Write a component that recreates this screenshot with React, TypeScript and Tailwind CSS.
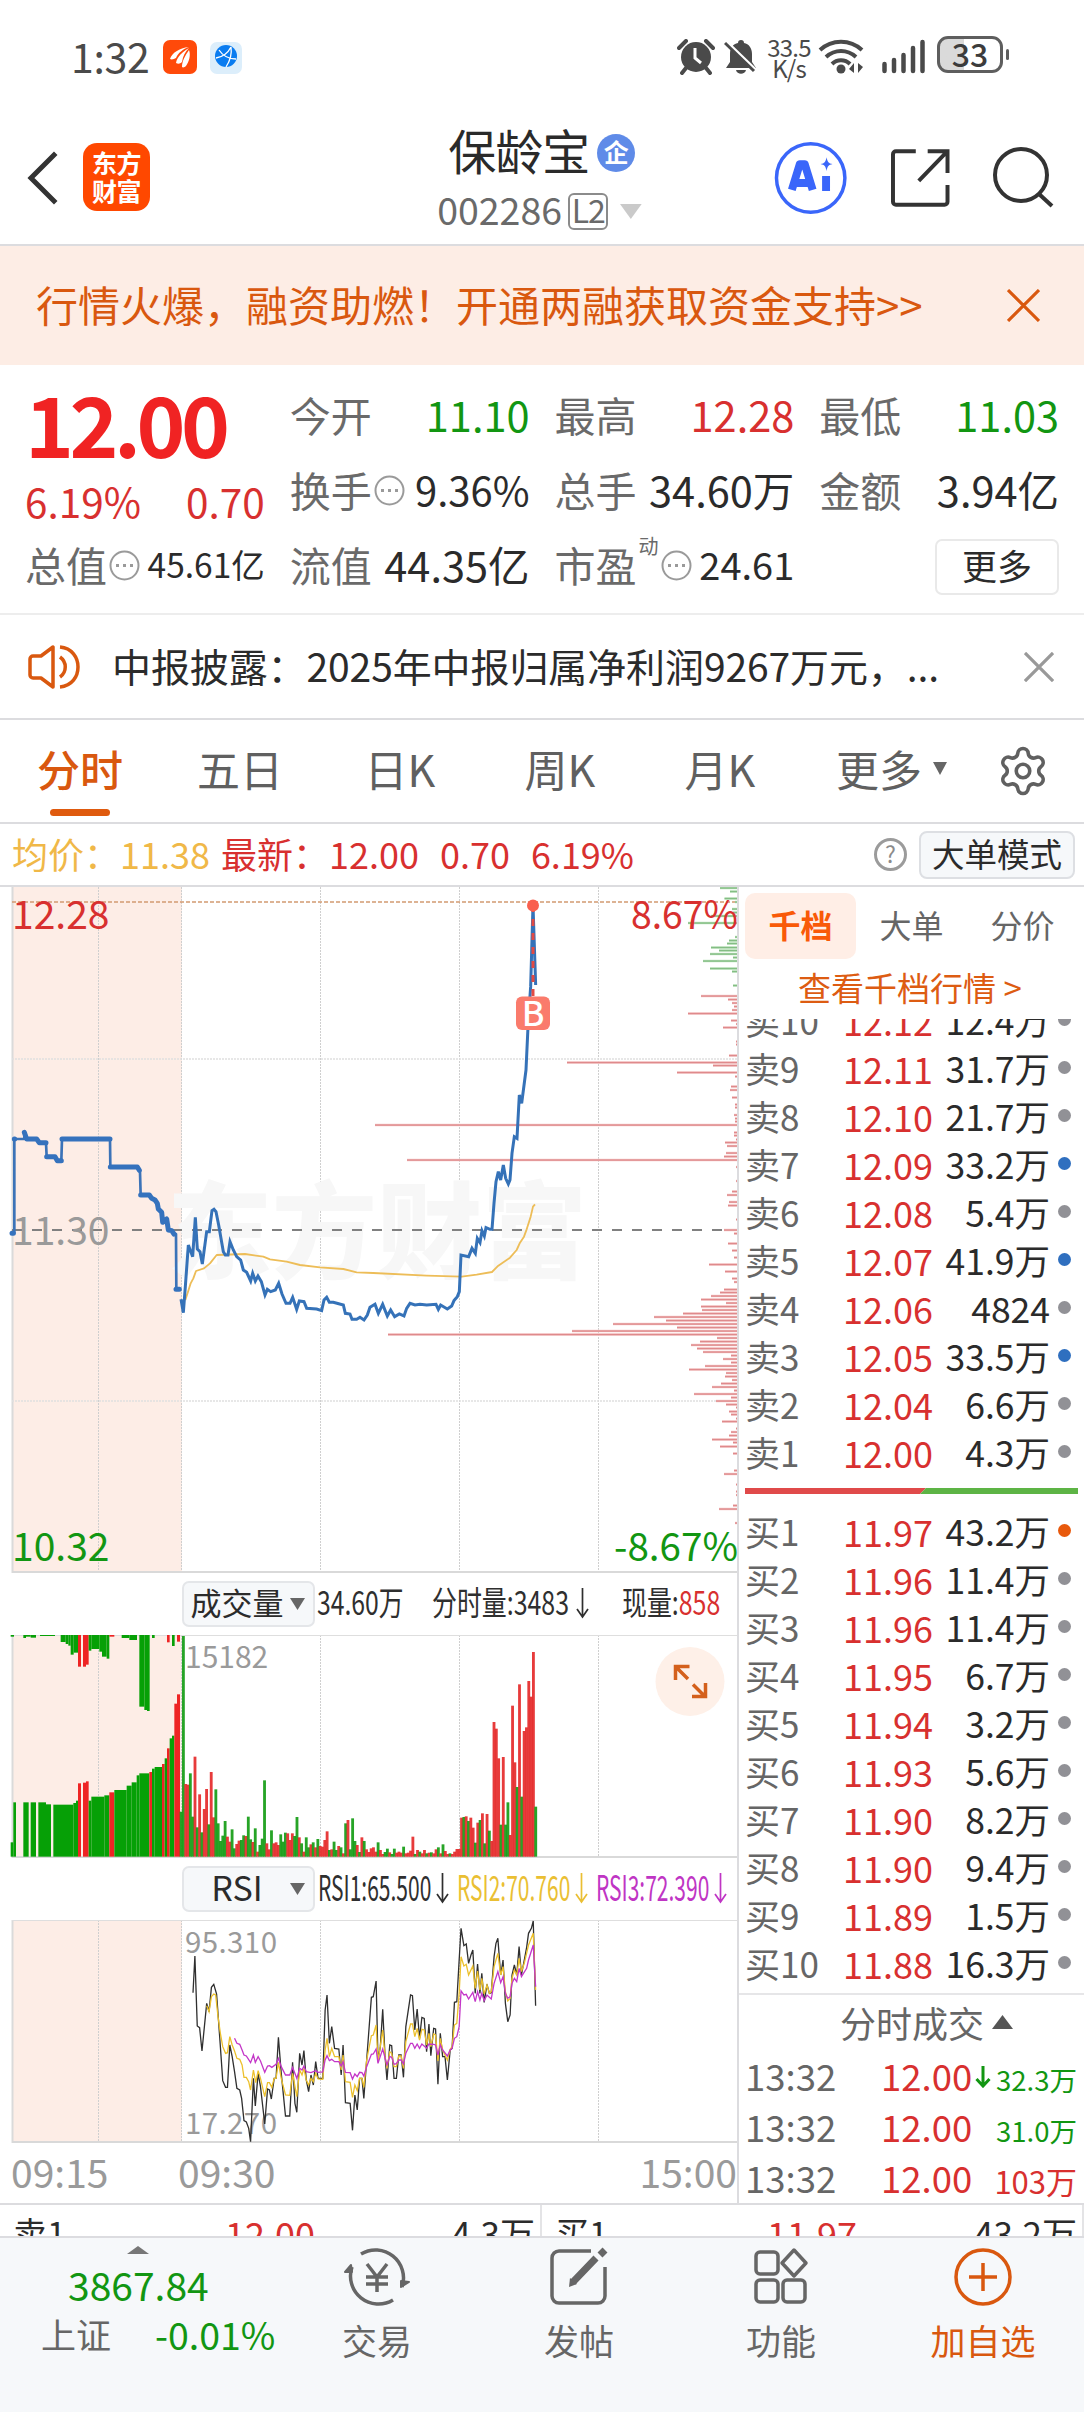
import React from 'react';
import { Settings } from 'lucide-react';

type Tone = 'up' | 'down' | 'ink';

const toneClass: Record<Tone, string> = {
  up: 'text-[#d8302f]',
  down: 'text-[#129612]',
  ink: 'text-[#2b2b2b]',
};

const RED = '#ee2424';
const GREEN = '#06a006';

/* ---------- order book ---------- */

interface BookRow {
  label: string;
  price: string;
  volume: string;
  dot?: string;
}

const asks: BookRow[] = [
  { label: '卖10', price: '12.12', volume: '12.4万' },
  { label: '卖9', price: '12.11', volume: '31.7万' },
  { label: '卖8', price: '12.10', volume: '21.7万' },
  { label: '卖7', price: '12.09', volume: '33.2万', dot: 'bg-[#2f6fbf]' },
  { label: '卖6', price: '12.08', volume: '5.4万' },
  { label: '卖5', price: '12.07', volume: '41.9万', dot: 'bg-[#2f6fbf]' },
  { label: '卖4', price: '12.06', volume: '4824' },
  { label: '卖3', price: '12.05', volume: '33.5万', dot: 'bg-[#2f6fbf]' },
  { label: '卖2', price: '12.04', volume: '6.6万' },
  { label: '卖1', price: '12.00', volume: '4.3万' },
];

const bids: BookRow[] = [
  { label: '买1', price: '11.97', volume: '43.2万', dot: 'bg-[#e8590c]' },
  { label: '买2', price: '11.96', volume: '11.4万' },
  { label: '买3', price: '11.96', volume: '11.4万' },
  { label: '买4', price: '11.95', volume: '6.7万' },
  { label: '买5', price: '11.94', volume: '3.2万' },
  { label: '买6', price: '11.93', volume: '5.6万' },
  { label: '买7', price: '11.90', volume: '8.2万' },
  { label: '买8', price: '11.90', volume: '9.4万' },
  { label: '买9', price: '11.89', volume: '1.5万' },
  { label: '买10', price: '11.88', volume: '16.3万' },
];

/* ---------- chart data ---------- */

// [y, length] of the volume-at-price bars
const profileDown: [number, number][] = [
  [888, 17], [891.5, 7], [898.5, 12.5], [902, 2], [909, 5], [912.5, 4], [916, 26], [923, 49], [937, 2],
  [940.5, 8], [943.5, 10], [947.5, 26], [950.5, 18], [954, 27], [957.5, 4], [961, 34], [968.5, 27],
  [971.5, 5], [985.5, 4],
];

const profileUp: [number, number][] = [
  [996, 36], [999.5, 9], [1003, 5], [1006.5, 3], [1010, 5], [1013.5, 49], [1020.5, 6], [1024, 1], [1027.5, 14],
  [1041.5, 1], [1044.5, 1], [1055.5, 8], [1062.5, 170], [1065.5, 24], [1072.5, 60], [1076.5, 2], [1086.5, 6],
  [1090, 7], [1097.5, 5], [1104.5, 2], [1107.5, 2], [1115, 3], [1118.5, 2], [1121.5, 2], [1125, 362],
  [1132.5, 3], [1135.5, 3], [1139.5, 1], [1142.5, 12], [1146, 10], [1153, 11], [1156.5, 13], [1160, 330],
  [1167, 1], [1181, 1], [1191.5, 5], [1195, 10], [1202, 8], [1205.5, 9], [1219.5, 1], [1230, 13], [1233.5, 3],
  [1243.5, 9], [1250.5, 5], [1257.5, 3], [1264.5, 28], [1271.5, 12], [1278.5, 5], [1282, 3], [1289.5, 13],
  [1292.5, 17], [1296, 26], [1299.5, 36], [1303, 11], [1306.5, 36], [1310, 35], [1313.5, 54], [1317, 83],
  [1320.5, 71], [1324, 124], [1327.5, 60], [1331, 165], [1334.5, 349], [1338, 20], [1341.5, 37], [1345, 46],
  [1348.5, 40], [1352, 34], [1355.5, 6], [1359, 14], [1362.5, 6], [1366, 32], [1369.5, 48], [1373, 11],
  [1376.5, 12], [1380, 5], [1383.5, 16], [1387, 25], [1390.5, 3], [1394, 43], [1397.5, 6], [1401, 21],
  [1404.5, 11], [1407.5, 1], [1411.5, 8], [1414.5, 6], [1418.5, 1], [1421.5, 15], [1428.5, 1], [1432, 6],
  [1435.5, 8], [1439.5, 25], [1442.5, 4], [1446.5, 17], [1453.5, 4], [1470.5, 3], [1474, 13], [1484.5, 1],
  [1491.5, 1], [1495, 1], [1505.5, 4], [1509, 18], [1523, 2],
];

const auctionLine =
  '36,1090 43,1090 43,807 73,807 73,787 80,807 110,807 118,818 138,818 140,860 165,860 172,872 184,872 186,807 330,807 331,891 412,891 420,905 422,975 448,975 455,985 465,990 472,1000 475,1017 485,1027 488,1057 500,1047 505,1080 515,1082 522,1092 528,1092 529,1258 540,1258';

const auctionMarks =
  'M36 1090h4M43 807h1M73 787l7 20h30l8 11h20M140 860h25l7 12h12M186 807h144M331 891h81l6 10M422 975h26l7 10l10 5l7 10l3 17l10 10l3 30l12-10l5 33l10 2l7 10M528 1258h10';

const priceLine =
  '543,1288 550,1328 556,1250 565,1125 578,1160 586,1042 592,1137 600,1145 607,1182 620,1085 628,1085 636,1022 642,1018 648,1025 656,1065 670,1145 676,1155 684,1155 690,1115 700,1140 710,1160 722,1170 730,1200 740,1207 752,1233 758,1210 766,1233 774,1218 784,1235 795,1275 802,1258 812,1265 826,1260 836,1240 846,1272 858,1300 870,1300 878,1282 890,1318 898,1293 912,1295 920,1315 950,1317 965,1322 972,1290 980,1282 988,1297 1000,1297 1030,1305 1036,1330 1050,1332 1056,1348 1070,1348 1080,1342 1092,1350 1102,1335 1110,1312 1125,1303 1135,1330 1148,1303 1162,1338 1172,1320 1184,1340 1198,1332 1212,1338 1220,1315 1230,1300 1245,1305 1260,1303 1280,1305 1308,1303 1315,1318 1322,1305 1342,1317 1355,1308 1362,1292 1372,1280 1378,1265 1383,1155 1406,1160 1416,1135 1426,1150 1432,1105 1440,1118 1446,1082 1453,1098 1458,1073 1470,1078 1476,1078 1482,1000 1488,935 1495,905 1502,930 1510,885 1517,925 1525,942 1530,930 1536,850 1543,800 1551,805 1558,675 1565,700 1578,600 1585,450 1592,350 1599,105 1607,345';

const averageLine =
  '556,1290 565,1262 572,1240 580,1225 588,1203 612,1195 630,1180 650,1155 735,1152 790,1160 810,1168 860,1175 900,1185 960,1192 1030,1197 1070,1207 1120,1209 1280,1217 1385,1220 1430,1214 1476,1206 1495,1187 1530,1163 1550,1140 1560,1118 1572,1100 1580,1078 1592,1040 1599,1010 1605,1003';

// [x0, x1, top, red?] of the call auction volume
const auctionVolume: [number, number, number, number][] = [
  [32, 40, 847, 0], [40, 48, 727, 0], [70, 86, 727, 0], [92, 108, 727, 0], [115, 138, 727, 0], [138, 153, 733, 0],
  [160, 220, 734, 0], [220, 228, 729, 0], [228, 234, 722, 0], [234, 243, 670, 1], [249, 258, 668, 1],
  [258, 266, 664, 1], [266, 274, 722, 0], [274, 313, 710, 0], [313, 328, 706, 0], [328, 343, 697, 1],
  [343, 380, 690, 0], [380, 395, 677, 0], [395, 410, 667, 0], [410, 418, 646, 0], [418, 448, 640, 0],
  [448, 456, 636, 1], [456, 464, 626, 0], [464, 486, 621, 0], [486, 494, 612, 1], [494, 501, 595, 0],
  [501, 509, 565, 1], [509, 516, 535, 0], [516, 523, 527, 0], [523, 531, 431, 1], [531, 540, 403, 1],
];

// [x0, x1, bottom, red?] of the unmatched volume hanging from the top
const unmatchedVolume: [number, number, number, number][] = [
  [32, 42, 230, 0], [70, 78, 234, 0], [78, 92, 230, 0], [92, 108, 233, 0], [120, 165, 228, 0], [182, 197, 246, 0],
  [197, 205, 252, 0], [205, 212, 257, 0], [212, 221, 284, 0], [221, 234, 278, 0], [234, 243, 320, 1],
  [249, 258, 320, 1], [258, 266, 314, 1], [266, 274, 272, 0], [274, 298, 267, 0], [298, 306, 275, 0],
  [306, 320, 290, 0], [320, 328, 296, 0], [328, 343, 230, 1], [365, 388, 234, 0], [388, 411, 240, 0],
  [418, 433, 440, 0], [433, 441, 450, 0], [441, 449, 453, 0], [456, 464, 234, 0], [501, 509, 247, 1],
  [516, 524, 258, 0], [531, 540, 245, 1],
];

// one entry for each minute from 09:30 on: top of the bar, and r / g
const minuteVolume =
  '755g 228g 672r 674r 640g 770g 590r 802g 703r 817g 747r 687r 793g 636r 772r 688g 790g 843g 827g 783g 830r 845r 808g 865g 852r 842r 840g 826g 828r 770g 838g 846r 805g 875r 855g 836g 661g 850r 868r 811g 850r 847r 855r 823g 845g 818g 820r 840r 820r 828g 771g 832r 850g 875r 832g 862g 853r 847g 862r 837g 858r 860r 840r 814r 870g 868r 845g 870g 858r 862g 880r 790g 780r 868g 775g 843g 855r 876g 832r 843g 868r 876r 865r 862r 875r 847g 870r 882r 876g 866g 877r 882g 866g 878r 875r 878r 860g 880r 878r 872r 830r 882g 870r 875g 880r 870r 880g 878r 877g 880r 868r 862g 880r 853g 873r 882r 880g 882r 875r 867r 867r 773r 771g 769r 783g 773r 803r 848g 788r 780g 760r 850g 762r 812g 843r 486r 506r 595r 794g 591r 794g 727g 825r 437r 607r 681g 373r 710g 513r 502r 363r 410r 276r 740g'.split(' ');

const rsi1 =
  '409,398 413,288 418,498 423,503 428,573 438,430 443,455 448,382 453,373 459,402 466,540 472,662 478,682 482,682 487,555 492,590 497,635 502,685 508,690 512,715 517,782 522,786 527,805 531,845 537,655 541,738 547,640 552,680 561,792 567,687 571,690 575,717 581,655 585,655 590,532 596,640 605,768 614,768 620,607 625,730 629,757 635,580 640,615 644,572 649,660 654,695 659,645 664,675 669,605 674,655 684,655 689,450 693,405 698,550 703,500 709,565 718,567 723,645 727,555 732,728 742,730 747,811 752,705 757,750 762,655 767,655 771,715 777,600 787,412 791,410 797,363 801,600 806,560 811,448 816,590 820,660 826,555 830,557 835,655 840,655 845,585 850,585 855,652 860,500 870,405 874,407 879,510 884,447 889,535 894,472 899,475 904,575 909,492 913,587 919,505 923,507 928,673 933,520 938,590 943,590 948,660 954,570 958,565 963,427 968,425 973,300 977,205 983,257 988,252 993,310 998,285 1002,270 1007,400 1012,312 1017,400 1021,340 1026,427 1032,373 1037,400 1041,398 1047,290 1051,250 1055,235 1061,345 1066,300 1071,430 1076,485 1081,465 1085,345 1090,315 1095,345 1100,260 1105,345 1111,300 1116,262 1120,220 1126,205 1130,183 1135,437';

const rsi2 =
  '438,437 443,455 448,410 453,402 457,405 462,470 467,520 472,560 478,580 482,578 487,530 492,555 497,573 502,595 508,598 513,615 517,652 522,652 527,665 531,690 537,630 542,668 547,632 552,655 561,710 567,668 571,668 576,682 581,655 585,655 590,607 596,655 605,705 614,706 620,640 629,710 635,630 640,645 644,625 649,660 654,675 659,655 664,665 669,640 674,657 684,658 689,570 693,535 698,590 703,565 709,590 718,590 723,630 727,585 732,665 742,667 747,712 752,675 757,692 762,655 767,655 771,682 777,600 787,527 791,525 797,495 801,605 811,510 816,590 820,625 826,575 830,580 835,620 840,620 845,588 850,588 855,625 860,545 870,492 874,492 879,530 884,505 889,540 894,508 899,510 904,555 909,520 913,560 919,522 923,525 928,603 933,535 938,570 948,600 954,568 958,560 963,495 968,490 973,400 977,290 983,318 988,313 993,345 1002,318 1007,385 1012,333 1017,390 1021,355 1026,402 1032,375 1037,400 1041,395 1047,320 1055,280 1061,345 1066,320 1071,395 1076,423 1081,415 1085,355 1090,330 1095,345 1100,295 1105,335 1111,310 1120,255 1130,220 1135,390';

const rsi3 =
  '497,535 502,550 508,553 513,570 517,585 522,588 531,608 537,585 541,607 547,590 552,603 561,637 567,618 571,617 576,622 585,613 590,595 596,620 605,645 614,645 620,622 629,655 635,625 640,630 644,618 649,635 659,638 664,635 669,632 674,637 684,636 689,600 693,587 698,602 703,598 709,605 718,605 723,618 727,605 732,637 742,638 747,657 752,642 757,650 762,637 767,638 771,648 777,620 787,583 791,582 797,567 801,610 811,567 820,615 826,590 830,592 835,613 840,611 845,600 850,600 855,612 860,580 870,550 874,550 879,565 884,552 889,565 894,552 904,565 909,552 919,553 923,555 928,585 933,555 938,570 948,588 954,570 958,565 963,535 968,530 973,500 977,393 983,405 988,403 993,417 1002,397 1007,425 1012,395 1017,420 1021,400 1026,422 1032,405 1041,417 1047,370 1055,335 1061,368 1066,350 1071,400 1076,415 1081,410 1085,370 1090,355 1095,365 1100,325 1105,350 1116,325 1120,300 1130,255 1135,380';

/* ---------- header ---------- */

const StatusBar = () => (
  <div className="flex h-[113px] items-start pl-[71px] pr-[75px] pt-[36px]">
    <span className="w-[92px] text-[41px] leading-[38px] tracking-[-0.3px] text-[#4a4a4a]">1:32</span>
    <svg width="34" height="34" viewBox="0 0 34 34" className="mt-[4px]">
      <rect width="34" height="34" rx="7" fill="#ff4a0a" />
      <path d="M7 19c2-6 9-11 19-12-6 2-11 6-13 11-2 1-4 2-6 1zM13 23c1-6 6-11 13-15-4 4-6 8-7 14-2 2-4 2-6 1zM19 27c0-6 3-11 7-17 2 5 0 12-3 16-1 1-3 2-4 1z" fill="#fff" />
    </svg>
    <svg width="32" height="32" viewBox="0 0 32 32" className="ml-[13px] mt-[6px]">
      <rect width="32" height="32" rx="7" fill="#dceefb" />
      <circle cx="16" cy="14" r="11" fill="#0a7cf0" />
      <path d="M6 16c6-1 12-5 15-11M9 8c4 6 10 9 17 9M21 5c1 7-1 14-5 20" fill="none" stroke="#fff" strokeWidth="1.300" />
    </svg>
    <div className="ml-auto flex items-start">
      <svg width="38" height="36" viewBox="0 0 38 36" className="mt-[3px]">
        <circle cx="19" cy="18" r="15" fill="#4a4a4a" />
        <path d="M2 9l7-7M36 9l-7-7M9 29l-4 5M29 29l4 5" stroke="#4a4a4a" strokeWidth="4" strokeLinecap="round" />
        <path d="M18 9v10l6 5" fill="none" stroke="#fff" strokeWidth="3" />
      </svg>
      <svg width="34" height="36" viewBox="0 0 34 36" className="ml-[9px] mt-[3px]">
        <path d="M17 1c2 0 3 1 3 3 5 1 8 5 8 11v8l4 6H2l4-6v-8c0-6 3-10 8-11 0-2 1-3 3-3zM12 31h10c-1 5-9 5-10 0z" fill="#4a4a4a" />
        <path d="M3 3l30 29" stroke="#fff" strokeWidth="3" />
        <path d="M1 4l29 28" stroke="#4a4a4a" strokeWidth="3" />
      </svg>
      <div className="ml-[8px] w-[46px] text-center text-[24px] leading-[21px] tracking-[-0.8px] text-[#4a4a4a]">
        <div>33.5</div>
        <div>K/s</div>
      </div>
      <svg width="46" height="36" viewBox="0 0 46 36" className="ml-[6px] mt-[3px]">
        <path d="M2 11c12-11 30-11 42 0M8 18c9-8 21-8 30 0M14 25c5-5 13-5 18 0" fill="none" stroke="#4a4a4a" strokeWidth="4" />
        <circle cx="23" cy="30" r="4.5" fill="#4a4a4a" />
        <path d="M31 30l5-6v10zM45 28l-5 6v-10z" fill="#4a4a4a" />
      </svg>
      <svg width="44" height="36" viewBox="0 0 44 36" className="ml-[18px] mt-[2px]">
        <path d="M2.500 33v-7M12 33v-11M21.500 33v-16M31 33v-23M40.500 33v-29" stroke="#4a4a4a" strokeWidth="4.500" strokeLinecap="round" />
      </svg>
      <div className="ml-[11px] flex h-[37px] w-[66px] items-center justify-center rounded-[11px] border-[3px] border-[#5e5e5e] bg-gradient-to-r from-[#dadada] from-40% to-white to-40% pb-[3px] text-[32px] font-medium leading-[30px] text-[#3c3c3c]">
        33
      </div>
      <span className="ml-[3px] mt-[13px] h-[11px] w-[3px] rounded-full bg-[#5e5e5e]" />
    </div>
  </div>
);

const Header = () => (
  <header className="flex h-[133px] items-start border-b-2 border-[#dcdcdf] pl-[27px] pr-[28px]">
    <svg width="32" height="56" viewBox="0 0 32 56" className="mt-[37px]">
      <path d="M29 3L4 28l25 25" fill="none" stroke="#333" strokeWidth="5" />
    </svg>
    <div className="ml-[24px] mt-[30px] flex h-[68px] w-[68px] flex-col items-center justify-center rounded-[14px] bg-[#ff4800] pb-[3px] text-[25px] font-bold leading-[28px] tracking-[-0.5px] text-white">
      <span>东方</span>
      <span>财富</span>
    </div>
    <div className="ml-[287px] w-[205px]">
      <div className="mt-[6px] flex h-[60px] items-center pl-[11px]">
        <span className="text-[48px] leading-[60px] tracking-[-1px] text-[#2a2a2a]">保龄宝</span>
        <span className="ml-[8px] mt-[8px] flex h-[38px] w-[38px] items-center justify-center rounded-full bg-[#5f8be8] pb-[3px] text-[25px] font-bold leading-none text-white">企</span>
      </div>
      <div className="mt-[8px] flex h-[48px] items-center">
        <span className="pb-[5px] text-[37.500px] leading-[48px] text-[#6a6a6a]">002286</span>
        <span className="ml-[6px] flex h-[37px] w-[41px] items-center justify-center rounded-[6px] border-2 border-[#8b8b8b] pb-[4px] text-[32px] leading-none tracking-[-1px] text-[#6a6a6a]">L2</span>
        <svg width="22" height="15" viewBox="0 0 22 15" className="ml-[12px]">
          <path d="M0 0h22L11 15z" fill="#cacaca" />
        </svg>
      </div>
    </div>
    <svg width="74" height="74" viewBox="0 0 74 74" className="ml-[132px] mt-[28px]">
      <circle cx="37" cy="37" r="34.500" fill="none" stroke="#3a66fa" strokeWidth="3.500" />
      <path d="M18 49L26 23h5l8 26M21 42h15M52.500 35v15" fill="none" stroke="#3a66fa" strokeWidth="8" strokeLinejoin="round" />
      <path d="M53 16c1 5 2 6 6 7-4 1-5 2-6 7-1-5-2-6-6-7 4-1 5-2 6-7z" fill="#3a66fa" />
    </svg>
    <svg width="60" height="60" viewBox="0 0 60 60" className="ml-[43px] mt-[35px]">
      <path d="M25 3H5a3 3 0 0 0-3 3v48a3 3 0 0 0 3 3h49a3 3 0 0 0 3-3V37M37 3h20v22M57 3L28 33" fill="none" stroke="#333" strokeWidth="4" />
    </svg>
    <svg width="64" height="64" viewBox="0 0 64 64" className="ml-[42px] mt-[33px] shrink-0">
      <circle cx="29" cy="29" r="26" fill="none" stroke="#333" strokeWidth="4" />
      <path d="M47 48l13 12" stroke="#333" strokeWidth="4" />
    </svg>
  </header>
);

const Cross = ({ size, color, weight }: { size: number; color: string; weight: number }) => (
  <svg width={size} height={size} viewBox="0 0 32 32">
    <path d="M1 1l30 30M31 1L1 31" stroke={color} strokeWidth={weight} />
  </svg>
);

const PromoBanner = () => (
  <div className="flex h-[119px] items-center justify-between bg-[#fdede5] pl-[36px] pr-[44px] text-[#d9580f]">
    <span className="whitespace-nowrap pb-[4px] text-[42px] leading-[60px]">行情火爆，融资助燃！开通两融获取资金支持&gt;&gt;</span>
    <Cross size={33} color="#d9580f" weight={3} />
  </div>
);

/* ---------- quote summary ---------- */

const Dots = () => (
  <svg width="31" height="31" viewBox="0 0 31 31" className="mb-[2px] ml-[2px] shrink-0">
    <circle cx="15.500" cy="15.500" r="14" fill="none" stroke="#9a9a9a" strokeWidth="2" />
    <path d="M7 15.500h3M14 15.500h3M21 15.500h3" stroke="#9a9a9a" strokeWidth="3" />
  </svg>
);

interface CellProps {
  label: string;
  value: string;
  tone?: Tone;
  size?: string;
  info?: boolean;
  sup?: string;
}

const Cell: React.FC<CellProps> = ({ label, value, tone = 'ink', size = 'text-[41.500px]', info, sup }) => (
  <div className="flex h-[75px] items-center whitespace-nowrap leading-[60px]">
    <span className="pb-[5px] text-[41px] text-[#6a6a6a]">{label}</span>
    {sup && <span className="ml-[2px] h-[62px] w-[20px] text-[20px] leading-[20px] text-[#6a6a6a]">{sup}</span>}
    {info && <Dots />}
    <span className={`ml-auto pb-[6px] ${size} ${toneClass[tone]}`}>{value}</span>
  </div>
);

const QuoteSummary = () => (
  <section className="grid h-[250px] auto-rows-[75px] grid-cols-4 content-start gap-x-[25px] border-b-2 border-[#ededed] px-[25px] pt-[14px]">
    <div className="row-span-2 h-[150px] whitespace-nowrap">
      <div className="h-[85px] text-[83px] font-bold leading-[87px] tracking-[-4.500px] text-[#f02323]">12.00</div>
      <div className="flex justify-between pt-[7px] text-[40.500px] leading-[60px] text-[#d8302f]">
        <span>6.19%</span>
        <span>0.70</span>
      </div>
    </div>
    <Cell label="今开" value="11.10" tone="down" />
    <Cell label="最高" value="12.28" tone="up" />
    <Cell label="最低" value="11.03" tone="down" />
    <Cell label="换手" value="9.36%" info size="text-[40px]" />
    <Cell label="总手" value="34.60万" />
    <Cell label="金额" value="3.94亿" />
    <Cell label="总值" value="45.61亿" info size="text-[33.500px]" />
    <Cell label="流值" value="44.35亿" />
    <Cell label="市盈" sup="动" value="24.61" info size="text-[38px]" />
    <div className="flex h-[75px] items-center justify-end">
      <div className="flex h-[56px] w-[124px] items-center justify-center rounded-[7px] border-2 border-[#e9e9e9] pb-[5px] text-[35px] leading-none text-[#2b2b2b]">更多</div>
    </div>
  </section>
);

const NoticeBar = () => (
  <div className="flex h-[105px] items-center border-b-2 border-[#dcdcdf] pl-[28px] pr-[30px]">
    <svg width="54" height="46" viewBox="0 0 54 46">
      <path d="M25 3v40L13 34H5a3 3 0 0 1-3-3V15a3 3 0 0 1 3-3h8zM32 13c7 5 7 15 0 20M32 3c24 2 24 38 0 40" fill="none" stroke="#d9580f" strokeWidth="3.500" strokeLinejoin="round" />
    </svg>
    <span className="ml-[30px] whitespace-nowrap pb-[4px] text-[39px] leading-[56px] tracking-[-0.1px] text-[#2b2b2b]">中报披露：2025年中报归属净利润9267万元，...</span>
    <span className="ml-auto">
      <Cross size={30} color="#999" weight={3.5} />
    </span>
  </div>
);

const PeriodTabs = () => (
  <nav className="flex h-[104px] border-b-2 border-[#dcdcdf] text-[43px] leading-[96px] text-[#606060]">
    <div className="flex w-[160px] flex-col items-center">
      <span className="h-[89px] font-medium text-[#d9580f]">分时</span>
      <span className="h-[7px] w-[60px] rounded-full bg-[#df5a0e]" />
    </div>
    {['五日', '日K', '周K', '月K'].map((tab) => (
      <span key={tab} className="w-[160px] text-center">{tab}</span>
    ))}
    <span className="flex w-[188px] items-center pb-[6px] pl-[36px]">
      更多
      <svg width="14" height="13" viewBox="0 0 14 13" className="ml-[11px]">
        <path d="M0 0h14L7 13z" fill="#666" />
      </svg>
    </span>
    <Settings className="ml-[8px] mt-[24px] h-[54px] w-[54px] text-[#606060]" strokeWidth={1.6} />
  </nav>
);

const PriceStrip = () => (
  <div className="flex h-[63px] items-center whitespace-nowrap border-b-2 border-[#dcdcdf] pl-[12px] pr-[9px] text-[36px] leading-[50px] text-[#d8302f]">
    <span className="w-[209px] pb-[4px] text-[#f0b848]">均价：11.38</span>
    <span className="pb-[4px]">最新：12.00</span>
    <span className="ml-[21px] pb-[4px]">0.70</span>
    <span className="ml-[21px] pb-[4px]">6.19%</span>
    <span className="ml-auto flex h-[33px] w-[33px] items-center justify-center rounded-full border-[3px] border-[#9b9b9b] pb-[2px] text-[23px] leading-none text-[#8b8b8b]">?</span>
    <span className="ml-[12px] flex h-[48px] w-[156px] items-center justify-center rounded-[8px] border-2 border-[#dddfe3] bg-[#f6f8fa] pb-[3px] text-[32.500px] leading-none text-[#2b2b2b]">大单模式</span>
  </div>
);

/* ---------- charts ---------- */

const Frame = ({ top, bottom }: { top: number; bottom: number }) => (
  <g>
    <rect x="12" y={top} width="170" height={bottom - top} fill="#fdede6" />
    <path d={`M12.500 ${top}V${bottom}`} stroke="#dadada" strokeWidth="2" />
    <path
      d={[98.5, 181.5, 320.5, 459.5, 598.5].map((x) => `M${x} ${top}V${bottom}`).join('')}
      stroke="#cfcfcf"
      strokeWidth="1"
      strokeDasharray="2 1"
    />
    <path d={`M12 ${bottom - 1}H737`} stroke="#d9d9d9" strokeWidth="2" />
  </g>
);

const PriceChart = () => (
  <svg width="738" height="686" viewBox="0 887 738 686" className="block">
    <Frame top={887} bottom={1573} />
    <text x="167" y="1270" fontSize="105" fontWeight="900" fill="#f7f7f7">东方财富</text>
    <path d="M12 1059H737M12 1401H737" stroke="#e0e0e0" strokeWidth="1.500" strokeDasharray="2 1" />
    <path d="M12 902H737" stroke="#d29a72" strokeWidth="1.700" strokeDasharray="4 2" />
    <path d="M12 1230H737" stroke="#808080" strokeWidth="2" strokeDasharray="10 10" />
    {profileUp.map(([y, len]) => (
      <g key={y}>
        <rect x={737 - len} y={y - 1.3} width={len} height="2.600" fill="#f9d3d3" />
        <rect x={737 - len} y={y - 0.7} width={len} height="1.500" fill="#df8a8c" />
      </g>
    ))}
    {profileDown.map(([y, len]) => (
      <g key={y}>
        <rect x={737 - len} y={y - 1.3} width={len} height="2.600" fill="#cdeccd" />
        <rect x={737 - len} y={y - 0.7} width={len} height="1.500" fill="#84bd84" />
      </g>
    ))}
    <g fontSize="39">
      <text x="12" y="929" fill="#d8302f">12.28</text>
      <text x="12" y="1245" fill="#9a9a9a">11.30</text>
      <text x="12" y="1561" fill="#129612">10.32</text>
      <text x="738" y="929" textAnchor="end" textLength="107" lengthAdjust="spacingAndGlyphs" fill="#d8302f">8.67%</text>
      <text x="738" y="1561" textAnchor="end" textLength="124" lengthAdjust="spacingAndGlyphs" fill="#129612">-8.67%</text>
    </g>
    <g transform="translate(0 870) scale(0.33333)" fill="none" strokeLinejoin="round">
      <polyline points={averageLine} stroke="#edbd58" strokeWidth="5.500" />
      <polyline points={auctionLine} stroke="#3b73b8" strokeWidth="8" />
      <path d={auctionMarks} stroke="#3572bd" strokeWidth="15" strokeLinecap="round" />
      <polyline points={priceLine} stroke="#3572b8" strokeWidth="9" strokeLinejoin="miter" />
    </g>
    <path d="M533 905V997" stroke="#e24a44" strokeWidth="3" strokeDasharray="7 7" />
    <circle cx="533" cy="905.500" r="6" fill="#f9604f" />
    <rect x="516" y="996.500" width="34" height="33.500" rx="6" fill="#fa7b6c" />
    <text x="533" y="1025.500" fontSize="34" fontWeight="500" textAnchor="middle" fill="#fff">B</text>
  </svg>
);

const VolumeChart = () => (
  <svg width="738" height="223" viewBox="0 1635 738 223" className="block">
    <Frame top={1635} bottom={1858} />
    <path d="M12 1635.500H737" stroke="#dedede" strokeWidth="1" />
    <g transform="translate(0 1560) scale(0.33333)">
      {auctionVolume.map(([x0, x1, top, red]) => (
        <rect key={x0} x={x0} y={top} width={x1 - x0} height={890 - top} fill={red ? RED : GREEN} />
      ))}
      {unmatchedVolume.map(([x0, x1, end, red]) => (
        <rect key={x0} x={x0} y={225} width={x1 - x0} height={end - 225} fill={red ? RED : GREEN} />
      ))}
      {minuteVolume.map((bar, i) => {
        const top = parseInt(bar, 10);
        return (
          <rect
            key={i}
            x={539 + i * 6.954}
            y={top}
            width="8.500"
            height={890 - top}
            fill={bar.endsWith('r') ? '#e42626' : '#109a10'}
            fillOpacity="0.9"
          />
        );
      })}
    </g>
    <text x="185" y="1668" fontSize="30" fill="#9a9a9a">15182</text>
    <circle cx="690" cy="1681.500" r="34.500" fill="#fef0e8" />
    <path d="M675.500 1680v-13.500h14M676 1667l12 12M693 1684.500l12 12M692 1696.500h13.500V1683" fill="none" stroke="#d4601c" strokeWidth="3.500" />
  </svg>
);

const RsiChart = () => (
  <svg width="738" height="223" viewBox="0 1920 738 223" className="block">
    <Frame top={1920} bottom={2143} />
    <path d="M12 1920.500H737" stroke="#dedede" strokeWidth="1" />
    <g fontSize="29.500" fill="#9a9a9a">
      <text x="185" y="1953" textLength="92">95.310</text>
      <text x="185" y="2134" textLength="92">17.270</text>
    </g>
    <g transform="translate(0 1860) scale(0.4719 0.33333)" fill="none" strokeWidth="1.300">
      <polyline points={rsi1} stroke="#2f2f2f" vectorEffect="non-scaling-stroke" />
      <polyline points={rsi2} stroke="#ecc02c" vectorEffect="non-scaling-stroke" />
      <polyline points={rsi3} stroke="#c436c8" vectorEffect="non-scaling-stroke" />
    </g>
  </svg>
);

const Selector = ({ name, size, children }: { name: string; size: string; children?: React.ReactNode }) => (
  <div className="flex h-[62px] pt-[8px]">
    <div className="ml-[182px] flex h-[46px] w-[133px] shrink-0 items-center rounded-[7px] border-2 border-[#e4e6e9] bg-[#f6f8fa] pr-[8px]">
      <span className={`flex-1 pb-[4px] text-center leading-[40px] text-[#2b2b2b] ${size}`}>{name}</span>
      <svg width="15" height="12" viewBox="0 0 15 12">
        <path d="M0 0h15L7.500 12z" fill="#666" />
      </svg>
    </div>
    {children}
  </div>
);

const Arrow = () => (
  <svg width="13" height="32" viewBox="0 0 13 32" className="shrink-0">
    <path d="M6.500 1v29M1 22l5.500 8L12 22" fill="none" stroke="currentColor" strokeWidth="1.700" />
  </svg>
);

const LegendItem = ({ box, text, color, arrow, narrow }: { box: string; text: React.ReactNode; color: string; arrow?: boolean; narrow: string }) => (
  <div className={`flex h-[44px] shrink-0 items-center whitespace-nowrap ${box} ${color}`}>
    <span className="min-w-0 flex-1">
      <span className={`inline-block origin-left pb-[4px] leading-[40px] ${narrow}`}>{text}</span>
    </span>
    {arrow && <Arrow />}
  </div>
);

const ChartColumn = () => (
  <div className="w-[739px] shrink-0 border-r-2 border-[#dcdcdf]">
    <PriceChart />
    <Selector name="成交量" size="text-[31px]">
      <LegendItem box="ml-[2px] w-[115px]" text="34.60万" color="text-[#2f2f2f]" narrow="text-[33px] scale-x-[0.75]" />
      <LegendItem box="w-[157px]" text="分时量:3483" color="text-[#2f2f2f]" arrow narrow="text-[33px] scale-x-[0.755]" />
      <LegendItem box="ml-[33px] w-[100px]" text={<>现量:<span className="text-[#d8302f]">858</span></>} color="text-[#2f2f2f]" narrow="text-[33px] scale-x-[0.755]" />
    </Selector>
    <VolumeChart />
    <Selector name="RSI" size="text-[34px]">
      <LegendItem box="ml-[3px] w-[131px]" text="RSI1:65.500" color="text-[#2f2f2f]" arrow narrow="text-[35px] scale-x-[0.6]" />
      <LegendItem box="ml-[8px] w-[131px]" text="RSI2:70.760" color="text-[#eabf33]" arrow narrow="text-[35px] scale-x-[0.6]" />
      <LegendItem box="ml-[8px] w-[131px]" text="RSI3:72.390" color="text-[#bf35c4]" arrow narrow="text-[35px] scale-x-[0.6]" />
    </Selector>
    <RsiChart />
    <div className="flex h-[60px] text-[39px] leading-[57px] text-[#9a9a9a]">
      <span className="w-[168px] pl-[11px]">09:15</span>
      <span className="pl-[10px]">09:30</span>
      <span className="ml-auto">15:00</span>
    </div>
  </div>
);

/* ---------- side panel ---------- */

const BookLine = ({ row }: { row: BookRow }) => (
  <div className="flex h-[48px] shrink-0 items-center whitespace-nowrap pl-[6px] pr-[13px] text-[36px] leading-[48px]">
    <span className="w-[95px] pb-[5px] text-[35px] text-[#666]">{row.label}</span>
    <span className="w-[93px] pb-[5px] text-right text-[#d8302f]">{row.price}</span>
    <span className="flex-1 pb-[5px] text-right text-[35.500px] text-[#2b2b2b]">{row.volume}</span>
    <span className={`mb-[5px] ml-[8px] h-[13px] w-[13px] rounded-full ${row.dot ?? 'bg-[#919196]'}`} />
  </div>
);

const trades = [
  { price: '12.00', volume: '32.3万', tone: 'down' as Tone, size: 'text-[27.500px]', arrow: true },
  { price: '12.00', volume: '31.0万', tone: 'down' as Tone, size: 'text-[27.500px]', arrow: false },
  { price: '12.00', volume: '103万', tone: 'up' as Tone, size: 'text-[31px]', arrow: false },
];

const SidePanel = () => (
  <aside className="w-[345px] shrink-0">
    <div className="flex pl-[6px] pt-[6px] text-[32px] leading-[62px] text-[#666]">
      <span className="h-[66px] w-[111px] rounded-[10px] bg-[#ffeee6] text-center font-bold text-[#f95a08]">千档</span>
      <span className="w-[111px] text-center">大单</span>
      <span className="w-[111px] text-center">分价</span>
    </div>
    <div className="h-[60px] pl-[59px] text-[33px] leading-[57px] text-[#dd5c12]">查看千档行情 &gt;</div>
    <div className="flex h-[459px] flex-col justify-end overflow-hidden">
      {asks.map((row) => (
        <BookLine key={row.label} row={row} />
      ))}
    </div>
    <svg width="333" height="6" viewBox="0 0 333 6" className="ml-[6px] mt-[10px] block">
      <path d="M0 0h181l-6 6H0z" fill="#e04a4a" />
      <path d="M181 0h152v6H175z" fill="#5db445" />
    </svg>
    <div className="pb-[4px] pt-[15px]">
      {bids.map((row) => (
        <BookLine key={row.label} row={row} />
      ))}
    </div>
    <div className="flex h-[60px] items-center border-t-2 border-[#e6e6e8] pl-[101px] text-[36px] leading-[50px] text-[#666]">
      <span className="pb-[5px]">分时成交</span>
      <svg width="21" height="14" viewBox="0 0 21 14" className="mb-[4px] ml-[8px]">
        <path d="M10.500 0L21 14H0z" fill="#555" />
      </svg>
    </div>
    {trades.map((t, i) => (
      <div key={i} className="flex h-[51px] items-center whitespace-nowrap pl-[6px] pr-[7px] text-[36.500px] leading-[50px]">
        <span className="w-[136px] pb-[5px] text-[#666]">13:32</span>
        <span className="w-[91px] pb-[5px] text-[#d8302f]">{t.price}</span>
        {t.arrow && (
          <svg width="16" height="22" viewBox="0 0 16 22" className="mb-[3px] ml-[3px] shrink-0">
            <path d="M8 0v20M1.500 13L8 20l6.500-7" fill="none" stroke="#129612" strokeWidth="3" />
          </svg>
        )}
        <span className={`ml-auto ${t.size} ${toneClass[t.tone]}`}>{t.volume}</span>
      </div>
    ))}
  </aside>
);

/* ---------- bottom ---------- */

const PeekRow = () => (
  <div className="flex h-[33px] overflow-hidden border-t-2 border-[#dcdcdf] text-[36px] leading-[56px] text-[#2b2b2b]">
    {[asks[9], bids[0]].map((row) => (
      <div key={row.label} className="flex h-[60px] w-1/2 shrink-0 justify-between border-r-2 border-[#e4e4e6] pl-[13px] pr-[5px]">
        <span className="w-[102px] text-[34px]">{row.label}</span>
        <span className="text-[#d8302f]">{row.price}</span>
        <span className="w-[110px] text-right text-[35px]">{row.volume}</span>
      </div>
    ))}
  </div>
);

const NavItem = ({ label, color, children }: { label: string; color: string; children?: React.ReactNode }) => (
  <div className={`flex w-[202px] flex-col items-center pt-[5px] ${color}`}>
    <svg width="68" height="68" viewBox="0 0 68 68" fill="none" stroke="currentColor" strokeWidth="3.500">
      {children}
    </svg>
    <span className="mt-[4px] text-[35px] leading-[50px]">{label}</span>
  </div>
);

const BottomBar = () => (
  <footer className="flex h-[176px] border-t-2 border-[#dcdce0] bg-[#f6f8fa]">
    <div className="w-[276px]">
      <svg width="22" height="8" viewBox="0 0 22 8" className="ml-[127px] mt-[8px] block">
        <path d="M11 0l11 8H0z" fill="#777" />
      </svg>
      <div className="mt-[2px] pl-[68px] text-[39px] leading-[56px] text-[#129612]">3867.84</div>
      <div className="flex items-center pl-[41px] leading-[44px]">
        <span className="w-[114px] text-[35px] text-[#666]">上证</span>
        <span className="text-[37.500px] text-[#129612]">-0.01%</span>
      </div>
    </div>
    <NavItem label="交易" color="text-[#666]">
      <path d="M18 11a28 28 0 0 1 41 33M50 57A28 28 0 0 1 9 24" />
      <path d="M66 39l-8 5V38zM2 29l6-7 1 7z" fill="currentColor" strokeWidth="2" strokeLinejoin="round" />
      <path d="M24 21l10 13 10-13M34 34v15M23 34h22M23 41h22" />
    </NavItem>
    <NavItem label="发帖" color="text-[#666]">
      <path d="M46 8H14a7 7 0 0 0-7 7v38a7 7 0 0 0 7 7h39a7 7 0 0 0 7-7V24" />
      <path d="M28 39l23-24M55 12l5-5" strokeWidth="7" />
      <path d="M24 44l1-9 7 6z" fill="currentColor" stroke="none" />
    </NavItem>
    <NavItem label="功能" color="text-[#666]">
      <rect x="9" y="9" width="22" height="22" rx="4" />
      <rect x="9" y="37" width="22" height="22" rx="4" />
      <rect x="36" y="37" width="22" height="22" rx="4" />
      <path d="M47 7l12 13-12 13-12-13z" strokeLinejoin="round" />
    </NavItem>
    <NavItem label="加自选" color="text-[#d9580f]">
      <circle cx="34" cy="34" r="27" />
      <path d="M34 20v28M20 34h28" />
    </NavItem>
  </footer>
);

export default function App() {
  return (
    <div className="h-[2412px] w-[1084px] overflow-hidden bg-white font-['Noto_Sans_CJK_SC',sans-serif]">
      <StatusBar />
      <Header />
      <PromoBanner />
      <QuoteSummary />
      <NoticeBar />
      <PeriodTabs />
      <PriceStrip />
      <div className="flex h-[1316px]">
        <ChartColumn />
        <SidePanel />
      </div>
      <PeekRow />
      <BottomBar />
    </div>
  );
}
